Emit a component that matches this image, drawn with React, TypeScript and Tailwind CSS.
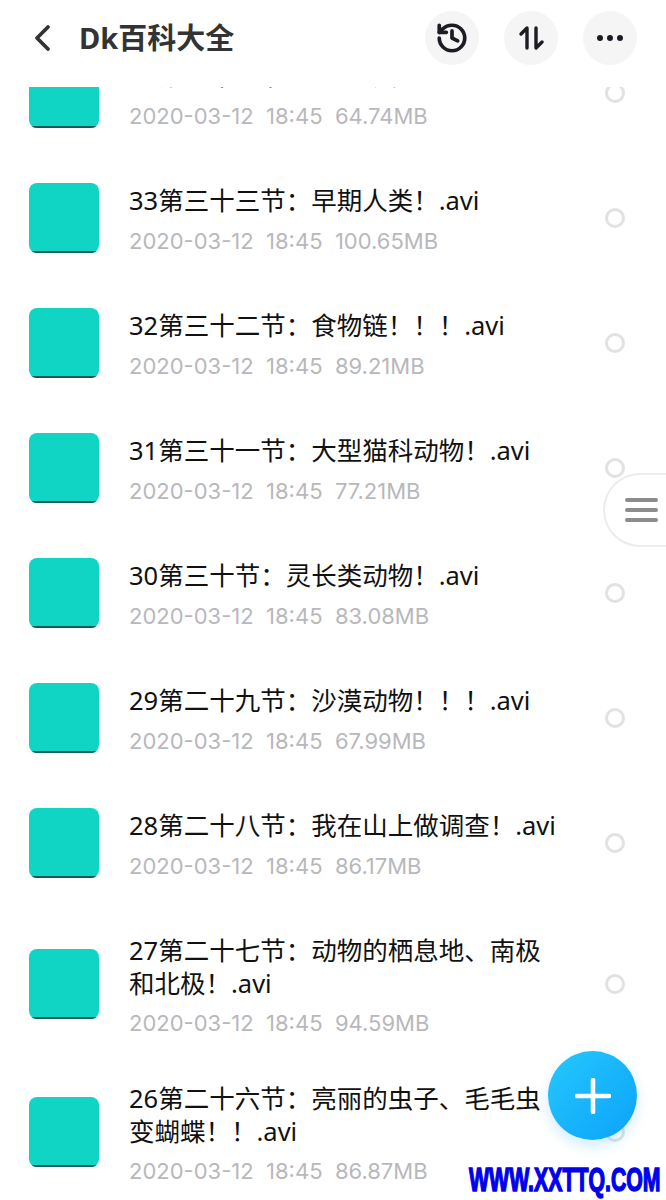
import { History } from "lucide-react";

const single = { row: "h-[125px] pt-[27px]", text: "mt-[1px]", meta: "mt-[8px]" };

const files = [
  { title: "34第三十四节：史前动物！！.avi", size: "64.74MB", ...single },
  { title: "33第三十三节：早期人类！.avi", size: "100.65MB", ...single },
  { title: "32第三十二节：食物链！！！.avi", size: "89.21MB", ...single },
  { title: "31第三十一节：大型猫科动物！.avi", size: "77.21MB", ...single },
  { title: "30第三十节：灵长类动物！.avi", size: "83.08MB", ...single },
  { title: "29第二十九节：沙漠动物！！！.avi", size: "67.99MB", ...single },
  { title: "28第二十八节：我在山上做调查！.avi", size: "86.17MB", ...single },
  { title: "27第二十七节：动物的栖息地、南极和北极！.avi", size: "94.59MB", row: "h-[157px] pt-[43px]", text: "-mt-[15px]", meta: "mt-[7px]" },
  { title: "26第二十六节：亮丽的虫子、毛毛虫变蝴蝶！！.avi", size: "86.87MB", row: "h-[148px] pt-[34px]", text: "-mt-[15px]", meta: "mt-[7px]" },
];

type FileRowProps = { title: string; size: string; row: string; text: string; meta: string };

function FileRow({ title, size, row, text, meta }: FileRowProps) {
  return (
    <div className={`flex items-start pl-[29px] pr-[41px] ${row}`}>
      <div className="relative w-[70px] h-[70px] shrink-0 rounded-lg bg-[#10d5c4] overflow-hidden">
        <div className="absolute bottom-0 left-[3px] right-[3px] h-[2px] bg-[#0b5a5c]" />
      </div>
      <div className={`ml-[30px] flex-1 min-w-0 ${text}`}>
        <div className="text-[25.5px] leading-[33px] text-[#111] w-[430px] break-all">{title}</div>
        <div className={`${meta} text-[22px] leading-[32px] text-[#b8b8bc] whitespace-pre font-['Inter','Noto_Sans',sans-serif]`}>
          {"2020-03-12  18:45  " + size}
        </div>
      </div>
      <div className="mt-[25px] shrink-0 w-[20px] h-[20px] rounded-full border-[3px] border-[#e2e2e2]" />
    </div>
  );
}

function RoundButton({ children }: { children: React.ReactNode }) {
  return (
    <button className="w-[54px] h-[54px] rounded-full bg-[#f5f5f5] flex items-center justify-center text-[#1c1c24]">
      {children}
    </button>
  );
}

export default function App() {
  return (
    <div className="relative w-[666px] h-[1200px] bg-white overflow-hidden flex flex-col font-['Noto_Sans','Noto_Sans_CJK_SC',sans-serif]">
      <header className="relative z-10 h-[87px] shrink-0 flex items-start pt-[11px] pl-[29px] pr-[29px] bg-white">
        <div className="h-[54px] flex items-center flex-1">
          <svg width="24" height="28" viewBox="0 0 24 28" fill="none" stroke="#333" strokeWidth="3.8" strokeLinecap="round" strokeLinejoin="round">
            <path d="M19 3 L8 14 L19 25" />
          </svg>
          <h1 className="ml-[26px] text-[29px] font-bold text-[#333]">Dk百科大全</h1>
        </div>
        <div className="flex gap-[25px]">
          <RoundButton>
            <History size={34} strokeWidth={2.6} />
          </RoundButton>
          <RoundButton>
            <svg width="26" height="24" viewBox="0 0 26 24" fill="none" stroke="currentColor" strokeWidth="3.4" strokeLinecap="round" strokeLinejoin="round">
              <path d="M9 22 V2 L3 8" />
              <path d="M18 2 V22 L24 16" />
            </svg>
          </RoundButton>
          <RoundButton>
            <svg width="28" height="8" viewBox="0 0 28 8" fill="currentColor">
              <circle cx="4" cy="4" r="3" />
              <circle cx="14" cy="4" r="3" />
              <circle cx="24" cy="4" r="3" />
            </svg>
          </RoundButton>
        </div>
      </header>

      <div className="flex-1 overflow-hidden">
        <div className="-mt-[56px]">
          {files.map((f) => (
            <FileRow key={f.title} {...f} />
          ))}
        </div>
      </div>

      {/* side handle */}
      <div className="absolute right-0 top-[473px] w-[63px] h-[74px] rounded-l-[37px] bg-white border-2 border-r-0 border-[#ececec] flex flex-col justify-center gap-[6px] pl-[20px] pr-[8px]">
        <div className="h-[4px] rounded bg-[#8c8c8c]" />
        <div className="h-[4px] rounded bg-[#8c8c8c]" />
        <div className="h-[4px] rounded bg-[#8c8c8c]" />
      </div>

      {/* add button */}
      <div className="absolute left-[548px] top-[1051px] w-[89px] h-[89px] rounded-full bg-gradient-to-br from-[#26c8fb] to-[#0ca2fb] shadow-[0_6px_14px_rgba(20,160,250,0.2)] flex items-center justify-center">
        <svg width="36" height="36" viewBox="0 0 36 36" stroke="#fff" strokeWidth="4.5" strokeLinecap="round">
          <path d="M18 2 V34 M2 18 H34" />
        </svg>
      </div>

      {/* watermark */}
      <span className="absolute left-[469px] top-[1162px] origin-left scale-x-[0.645] whitespace-nowrap font-['Liberation_Sans',sans-serif] font-bold text-[33px] leading-[36px] text-[#0000ee] [-webkit-text-stroke:1.5px_#0000ee]">
        WWW.XXTTQ.COM
      </span>
    </div>
  );
}
